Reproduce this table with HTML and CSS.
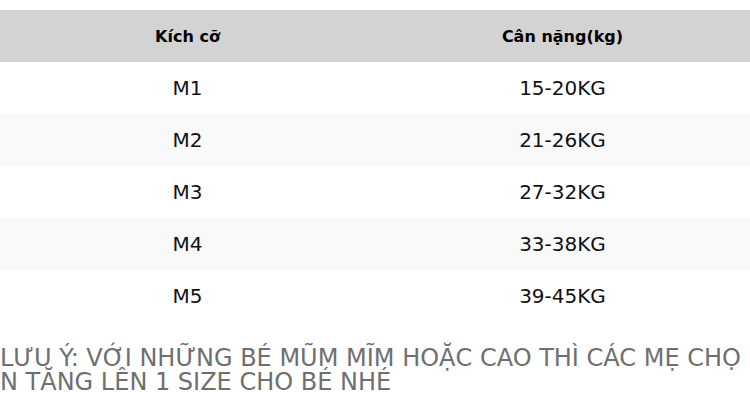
FILE: index.html
```html
<!DOCTYPE html>
<html lang="vi">
<head>
<meta charset="utf-8">
<link rel="stylesheet" href="styles.css">
</head>
<body>
<table class="size-table">
  <thead>
    <tr><th>Kích cỡ</th><th>Cân nặng(kg)</th></tr>
  </thead>
  <tbody>
    <tr><td>M1</td><td>15-20KG</td></tr>
    <tr><td>M2</td><td>21-26KG</td></tr>
    <tr><td>M3</td><td>27-32KG</td></tr>
    <tr><td>M4</td><td>33-38KG</td></tr>
    <tr><td>M5</td><td>39-45KG</td></tr>
  </tbody>
</table>
<p class="note">LƯU Ý: VỚI NHỮNG BÉ MŨM MĨM HOẶC CAO THÌ CÁC MẸ CHỌN TĂNG LÊN 1 SIZE CHO BÉ NHÉ</p>
</body>
</html>
```
FILE: styles.css
```css
html, body {
  margin: 0;
  padding: 0;
  background: #fff;
}
body {
  padding-top: 10px;
  font-family: "DejaVu Sans", sans-serif;
}
.size-table {
  width: 100%;
  border-collapse: collapse;
  table-layout: fixed;
}
.size-table th {
  height: 52px;
  background: #d3d3d3;
  font-size: 16px;
  font-weight: bold;
  color: #000;
  text-align: center;
  padding: 0;
}
.size-table td {
  height: 52px;
  font-size: 20px;
  color: #111;
  text-align: center;
  padding: 0;
}
.size-table tbody tr:nth-child(even) td {
  background: #f9f9f9;
}
.note {
  margin: 24px 0 0;
  font-size: 24px;
  line-height: 24px;
  color: #6f6f6f;
  word-break: break-all;
}
```
